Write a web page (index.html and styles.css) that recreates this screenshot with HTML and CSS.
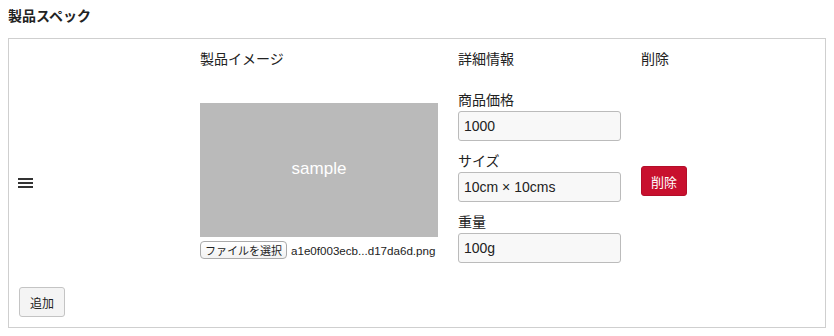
FILE: index.html
```html
<!DOCTYPE html>
<html lang="ja">
<head>
<meta charset="utf-8">
<link rel="stylesheet" href="styles.css">
</head>
<body>
<div class="title">製品スペック</div>
<div class="box">
  <div class="grid">
    <div class="head"></div>
    <div class="head">製品イメージ</div>
    <div class="head">詳細情報</div>
    <div class="head">削除</div>

    <div class="cell handle-cell">
      <svg class="handle" width="15" height="10" viewBox="0 0 15 10">
        <rect x="0" y="0" width="15" height="2" fill="#333"/>
        <rect x="0" y="4" width="15" height="2" fill="#333"/>
        <rect x="0" y="8" width="15" height="2" fill="#333"/>
      </svg>
    </div>
    <div class="cell image-cell">
      <div class="preview">sample</div>
      <div class="file">
        <span class="file-btn">ファイルを選択</span>
        <span class="file-name">a1e0f003ecb...d17da6d.png</span>
      </div>
    </div>
    <div class="cell detail-cell">
      <label class="lbl">商品価格</label>
      <input class="inp" type="text" value="1000">
      <label class="lbl">サイズ</label>
      <input class="inp" type="text" value="10cm × 10cms">
      <label class="lbl">重量</label>
      <input class="inp" type="text" value="100g">
    </div>
    <div class="cell del-cell">
      <button class="del-btn">削除</button>
    </div>
  </div>
  <button class="add-btn">追加</button>
</div>
</body>
</html>
```

FILE: styles.css
```css
* { box-sizing: border-box; }
body {
  margin: 8px;
  background: #fff;
  color: #222;
  font-family: "Liberation Sans", "Noto Sans CJK JP", sans-serif;
  font-size: 14px;
}
.title {
  font-weight: bold;
  font-size: 14px;
  line-height: 17px;
  margin-bottom: 13px;
  color: #222;
}
.box {
  border: 1px solid #cfcfcf;
  padding: 10px;
}
.grid {
  display: grid;
  grid-template-columns: 181px 258px 183px 1fr;
  row-gap: 21px;
  align-items: center;
}
.head {
  line-height: 20px;
  align-self: start;
}
.handle-cell { padding-top: 13px; margin-left: -1px; }
.handle { display: block; }
.image-cell { padding-top: 9px; }
.preview {
  width: 238px;
  height: 134px;
  background: #bababa;
  color: #fff;
  font-size: 17px;
  display: flex;
  align-items: center;
  justify-content: center;
  padding-bottom: 3px;
}
.file {
  margin-top: 4px;
  display: flex;
  align-items: center;
  gap: 4px;
  height: 18px;
}
.file-btn {
  display: inline-flex;
  align-items: center;
  justify-content: center;
  width: 87px;
  height: 18px;
  border: 1px solid #aaa;
  border-radius: 4px;
  background: linear-gradient(#fff, #f2f2f2);
  font-size: 11px;
  color: #222;
}
.file-name {
  font-size: 11.6px;
  color: #222;
}
.detail-cell {
  display: flex;
  flex-direction: column;
}
.lbl {
  display: block;
  line-height: 20px;
  margin-bottom: 1px;
}
.inp {
  width: 163px;
  height: 30px;
  border: 1px solid #bbb;
  border-radius: 3px;
  background: #f8f8f8;
  padding: 0 5px;
  font-family: "Liberation Sans", "Noto Sans CJK JP", sans-serif;
  font-size: 14px;
  color: #222;
  margin-bottom: 10px;
}
.inp:last-child { margin-bottom: 0; }
.del-cell { padding-top: 9px; }
.del-btn {
  display: block;
  width: 46px;
  height: 30px;
  border: 1px solid #b30d29;
  border-radius: 3px;
  background: #c8102e;
  color: #fff;
  font-family: "Liberation Sans", "Noto Sans CJK JP", sans-serif;
  font-size: 13px;
  padding: 0;
}
.add-btn {
  display: block;
  margin-top: 24px;
  width: 46px;
  height: 30px;
  border: 1px solid #c4c4c4;
  border-radius: 3px;
  background: #f4f4f4;
  color: #222;
  font-family: "Liberation Sans", "Noto Sans CJK JP", sans-serif;
  font-size: 12px;
  padding: 0;
}
```
